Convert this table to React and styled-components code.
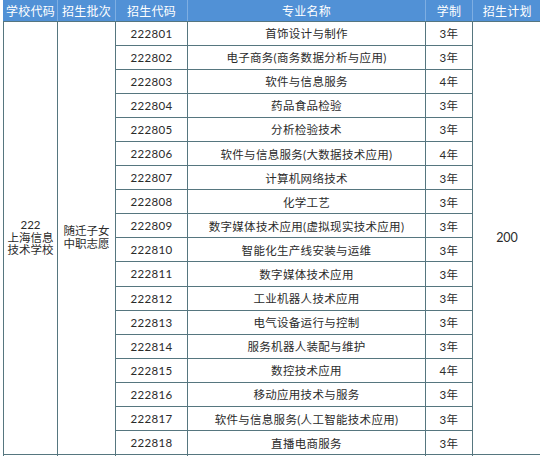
import styled, { createGlobalStyle } from 'styled-components'

const font = '"Lato", "Noto Sans CJK SC", sans-serif'
const line = '#56767f'

const rows = [
    ['222801', '首饰设计与制作', '3年'],
    ['222802', '电子商务(商务数据分析与应用)', '3年'],
    ['222803', '软件与信息服务', '4年'],
    ['222804', '药品食品检验', '3年'],
    ['222805', '分析检验技术', '3年'],
    ['222806', '软件与信息服务(大数据技术应用)', '4年'],
    ['222807', '计算机网络技术', '3年'],
    ['222808', '化学工艺', '3年'],
    ['222809', '数字媒体技术应用(虚拟现实技术应用)', '3年'],
    ['222810', '智能化生产线安装与运维', '3年'],
    ['222811', '数字媒体技术应用', '3年'],
    ['222812', '工业机器人技术应用', '3年'],
    ['222813', '电气设备运行与控制', '3年'],
    ['222814', '服务机器人装配与维护', '3年'],
    ['222815', '数控技术应用', '4年'],
    ['222816', '移动应用技术与服务', '3年'],
    ['222817', '软件与信息服务(人工智能技术应用)', '3年'],
    ['222818', '直播电商服务', '3年'],
]

const widths = [54, 58, 72, 238, 47, 69]

function App() {
    return (
        <>
            <GlobalStyle />
            <Page>
                <Table>
                    <colgroup>
                        {widths.map((w, i) => <col key={i} style={{ width: w }} />)}
                    </colgroup>
                    <thead>
                        <HeadRow>
                            <HeadCell>学校代码</HeadCell>
                            <HeadCell>招生批次</HeadCell>
                            <HeadCell>招生代码</HeadCell>
                            <HeadCell>专业名称</HeadCell>
                            <HeadCell>学制</HeadCell>
                            <HeadCell>招生计划</HeadCell>
                        </HeadRow>
                    </thead>
                    <tbody>
                        {rows.map((r, i) => (
                            <Row key={r[0]}>
                                {i === 0 && (
                                    <>
                                        <SpanCell rowSpan={rows.length}>222<br />上海信息<br />技术学校</SpanCell>
                                        <SpanCell rowSpan={rows.length}>随迁子女<br />中职志愿</SpanCell>
                                    </>
                                )}
                                <Cell>{r[0]}</Cell>
                                <Cell>{r[1]}</Cell>
                                <Cell>{r[2]}</Cell>
                                {i === 0 && <SpanCell rowSpan={rows.length} $big>200</SpanCell>}
                            </Row>
                        ))}
                        <Row>
                            {widths.map((w, i) => <Cell key={i}></Cell>)}
                        </Row>
                    </tbody>
                </Table>
            </Page>
        </>
    )
}

const GlobalStyle = createGlobalStyle`
    html, body {
        margin: 0;
        padding: 0;
        background: #ffffff;
    }
    body {
        width: 540px;
        height: 456px;
        overflow: hidden;
    }
`

const Page = styled.div`
    width: 540px;
    height: 456px;
    overflow: hidden;
    padding-left: 3px;
    box-sizing: border-box;
`

const Table = styled.table`
    border-collapse: collapse;
    table-layout: fixed;
    width: 538px;
    font-family: ${font};
    font-size: 11.5px;
    color: #2b2b2b;
`

const HeadRow = styled.tr`
    height: 21px;
    background-color: #5191d6;
`

const HeadCell = styled.th`
    padding: 0;
    font-weight: normal;
    color: #ffffff;
    font-size: 12px;
    letter-spacing: 0.3px;
    text-align: center;
    border-left: 1px solid #7eaee2;
    border-bottom: 1px solid ${line};
    &:first-child {
        border-left: 1px solid #5191d6;
    }
`

const Row = styled.tr`
    height: 24.1px;
`

const Cell = styled.td`
    padding: 0;
    text-align: center;
    border: 1px solid ${line};
    white-space: nowrap;
    letter-spacing: 0.3px;
`

const SpanCell = styled.td`
    padding: 0;
    text-align: center;
    vertical-align: middle;
    border: 1px solid ${line};
    line-height: ${({ $big }) => ($big ? '14px' : '12.5px')};
    font-size: ${({ $big }) => ($big ? '12.5px' : '11.5px')};
`

export default App
